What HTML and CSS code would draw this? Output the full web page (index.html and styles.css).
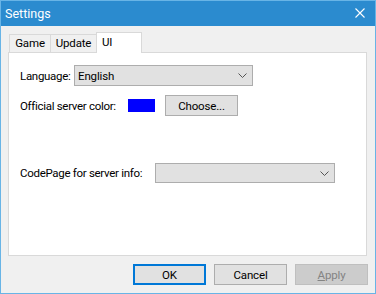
FILE: index.html
```html
<!DOCTYPE html>
<html>
<head>
    <title>Settings</title>
    <link rel="stylesheet" href="styles.css">
</head>
<body>
    <div class="window">
        <div class="titlebar">
            <span class="title">Settings</span>
            <svg class="close" width="10" height="10" viewBox="0 0 10 10">
                <path d="M0.5 0.5 L9.5 9.5 M9.5 0.5 L0.5 9.5" stroke="#fff" stroke-width="1.1" fill="none"/>
            </svg>
        </div>

        <div class="content">
            <div class="tabs">
                <div class="tab tab-game">Game</div>
                <div class="tab tab-update">Update</div>
                <div class="tab tab-ui active">UI</div>
            </div>

            <div class="panel">
                <div class="row row-lang">
                    <span class="label label-lang">Language:</span>
                    <div class="combo combo-lang">
                        <span>English</span>
                        <svg class="chevron" width="9" height="5" viewBox="0 0 9 5">
                            <path d="M0.5 0.5 L4.5 4.5 L8.5 0.5" stroke="#555" stroke-width="1" fill="none"/>
                        </svg>
                    </div>
                </div>

                <div class="row row-color">
                    <span class="label label-color">Official server color:</span>
                    <span class="swatch"></span>
                    <button class="btn btn-choose">Choose...</button>
                </div>

                <div class="row row-codepage">
                    <span class="label label-codepage">CodePage for server info:</span>
                    <div class="combo combo-codepage">
                        <span></span>
                        <svg class="chevron" width="9" height="5" viewBox="0 0 9 5">
                            <path d="M0.5 0.5 L4.5 4.5 L8.5 0.5" stroke="#555" stroke-width="1" fill="none"/>
                        </svg>
                    </div>
                </div>
            </div>

            <div class="buttons">
                <button class="btn btn-ok">OK</button>
                <button class="btn">Cancel</button>
                <button class="btn btn-disabled"><u>A</u>pply</button>
            </div>
        </div>
    </div>
</body>
</html>
```

FILE: styles.css
```css
body {
    margin: 0;
    font-family: Roboto, "Liberation Sans", sans-serif;
    font-size: 11.5px;
    letter-spacing: -0.15px;
    color: #000;
}
.window {
    width: 376px;
    height: 294px;
    box-sizing: border-box;
    border: 1px solid #68b4e6;
    background: #f0f0f0;
}
.titlebar {
    height: 25px;
    background: #2b8bcf;
    color: #fff;
    display: flex;
    align-items: center;
    justify-content: space-between;
    padding: 0 10px 0 4px;
}
.title {
    font-size: 12.5px;
    letter-spacing: 0;
    margin-top: -1px;
}
.close {
    display: block;
    margin-top: -1px;
}
.content {
    padding: 7px 0 0 7px;
}
.tabs {
    display: flex;
    align-items: flex-end;
    height: 19px;
    padding-left: 1px;
    position: relative;
    z-index: 1;
}
.tab {
    box-sizing: border-box;
    height: 18px;
    border: 1px solid #d9d9d9;
    border-bottom: none;
    background: #f0f0f0;
    margin-left: -1px;
    text-align: center;
    line-height: 17px;
}
.tab:first-child {
    margin-left: 0;
}
.tab-game { width: 42px; }
.tab-update { width: 47px; }
.tab-ui {
    width: 46px;
    height: 21px;
    margin-bottom: -1px;
    background: #fff;
    line-height: 18px;
    text-align: left;
    padding-left: 5px;
}
.panel {
    box-sizing: border-box;
    width: 359px;
    height: 204px;
    background: #fff;
    border: 1px solid #d9d9d9;
    padding: 12px 0 0 11px;
}
.row {
    display: flex;
    align-items: center;
    height: 21px;
}
.row-color {
    margin-top: 9px;
}
.row-codepage {
    margin-top: 47px;
    height: 20px;
}
.label {
    white-space: nowrap;
    letter-spacing: -0.3px;
}
.label-lang { width: 54px; }
.label-color { width: 108px; }
.label-codepage { width: 135px; }
.combo {
    box-sizing: border-box;
    height: 21px;
    background: #e1e1e1;
    border: 1px solid #adadad;
    display: flex;
    align-items: center;
    justify-content: space-between;
    padding: 0 5px 0 3px;
}
.combo-lang {
    width: 179px;
}
.combo-codepage {
    width: 180px;
    height: 20px;
}
.chevron {
    display: block;
}
.swatch {
    width: 27px;
    height: 13px;
    background: #0000ff;
}
.btn {
    box-sizing: border-box;
    height: 21px;
    background: #e1e1e1;
    border: 1px solid #adadad;
    font-family: inherit;
    font-size: inherit;
    letter-spacing: inherit;
    color: #000;
    padding: 0;
    margin: 0;
}
.btn-choose {
    width: 73px;
    margin-left: 10px;
}
.buttons {
    display: flex;
    gap: 8px;
    margin: 8px 0 0 125px;
}
.buttons .btn {
    width: 73px;
}
.btn-ok {
    border: 2px solid #0078d7;
}
.btn-disabled {
    background: #cccccc;
    border-color: #bfbfbf;
    color: #838383;
}
```
